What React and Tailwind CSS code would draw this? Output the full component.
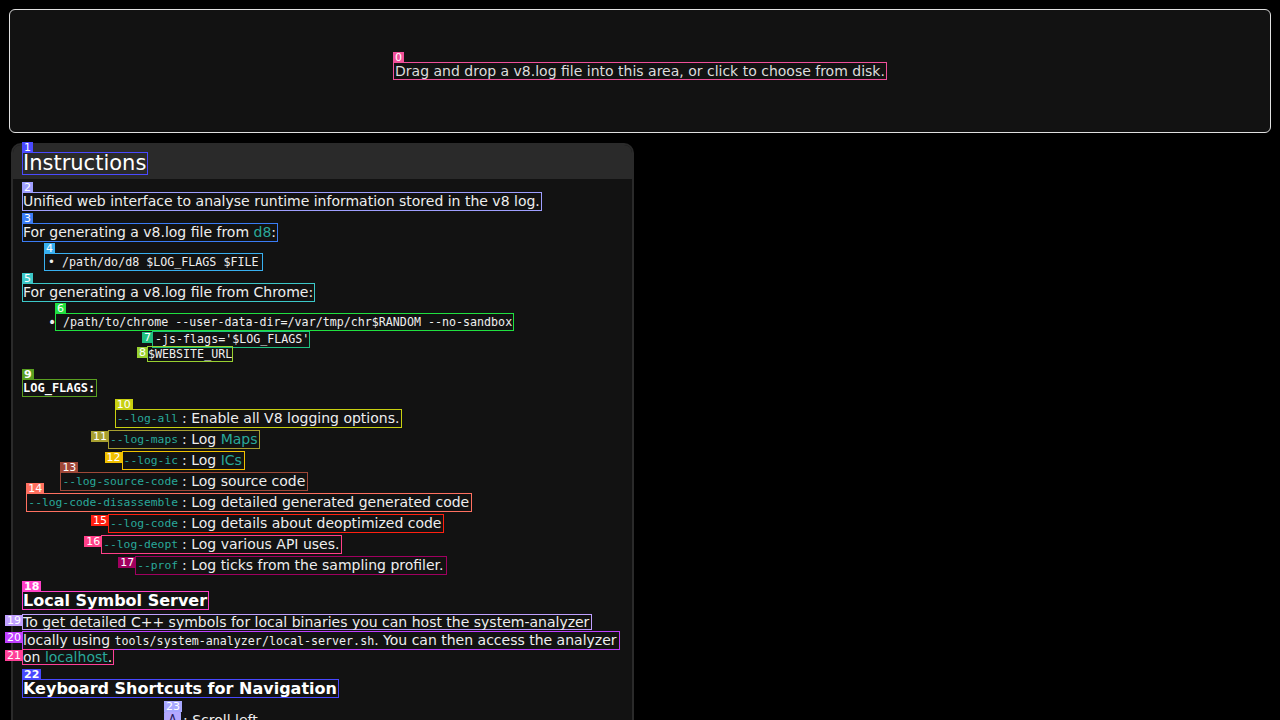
import React from "react";

const sans = "font-['DejaVu_Sans',sans-serif]";
const mono = "font-['DejaVu_Sans_Mono',monospace]";

// small numbered marker glued to a box
function Tag({ n, bg, side = "top" }) {
  const pos = side === "top" ? "left-[-1px] bottom-full" : "right-full top-0";
  return (
    <span
      className={`absolute ${pos} ${bg} ${sans} px-[2px] text-[11px] leading-[11px] text-white whitespace-nowrap`}
    >
      {n}
    </span>
  );
}

const Teal = ({ children }) => <span className="text-[#29a89a]">{children}</span>;

const flags = [
  { n: 10, code: "--log-all", text: "Enable all V8 logging options.", side: "top", bg: "bg-[#c8d010]", bd: "border-[#c8d010]" },
  { n: 11, code: "--log-maps", text: <>Log <Teal>Maps</Teal></>, side: "left", bg: "bg-[#a8a030]", bd: "border-[#a8a030]" },
  { n: 12, code: "--log-ic", text: <>Log <Teal>ICs</Teal></>, side: "left", bg: "bg-[#f0c000]", bd: "border-[#f0c000]" },
  { n: 13, code: "--log-source-code", text: "Log source code", side: "top", bg: "bg-[#a04838]", bd: "border-[#a04838]" },
  { n: 14, code: "--log-code-disassemble", text: "Log detailed generated generated code", side: "top", bg: "bg-[#ff7060]", bd: "border-[#ff7060]" },
  { n: 15, code: "--log-code", text: "Log details about deoptimized code", side: "left", bg: "bg-[#ff2010]", bd: "border-[#ff2010]" },
  { n: 16, code: "--log-deopt", text: "Log various API uses.", side: "left", bg: "bg-[#ff4088]", bd: "border-[#ff4088]" },
  { n: 17, code: "--prof", text: "Log ticks from the sampling profiler.", side: "left", bg: "bg-[#a00060]", bd: "border-[#a00060]" },
];

function FlagRow({ f, first }) {
  return (
    <div className={`flex ${first ? "mt-[12px]" : "mt-[2px]"}`}>
      <div className="w-[156px] flex justify-end">
        <span className={`relative border-y border-l ${f.bd} pl-[1px] ${mono} text-[11.3px] leading-[17px] text-[#29a89a] whitespace-nowrap`}>
          <Tag n={f.n} bg={f.bg} side={f.side} />
          {f.code}
        </span>
      </div>
      <span className={`border-y border-r ${f.bd} pl-[4px] pr-[2px] text-[14px] leading-[17px] whitespace-nowrap`}>
        : {f.text}
      </span>
    </div>
  );
}

export default function App() {
  return (
    <div className={`min-h-screen bg-black pt-[9px] pb-10 ${sans} text-[#eeeeee]`}>
      {/* drop zone */}
      <div className="mx-[9px] h-[124px] border border-[#e0e0e0] rounded-[6px] bg-[#121212] flex items-center justify-center">
        <span className="relative border border-[#f0509a] px-[1px] text-[14px] leading-[16px] text-[#dddddd]">
          <Tag n={0} bg="bg-[#f0509a]" />
          Drag and drop a v8.log file into this area, or click to choose from disk.
        </span>
      </div>

      {/* instructions panel */}
      <div className="mt-[10px] ml-[11px] w-[623px] border-2 border-[#2a2a2a] rounded-t-[10px] bg-[#121212]">
        <div className="h-[34px] bg-[#2a2a2a] rounded-t-[8px] pt-[7px] pl-[9px]">
          <h1 className="relative inline-block border border-[#4a4aff] pr-[1px] text-[21px] leading-[21px] text-white font-normal">
            <Tag n={1} bg="bg-[#4a4aff]" />
            Instructions
          </h1>
        </div>

        <div className="pt-[13px] pl-[9px] flex flex-col items-start text-[14px]">
          <p className="relative border border-[#9f9fff] pr-[1px] leading-[17px]">
            <Tag n={2} bg="bg-[#9f9fff]" />
            Unified web interface to analyse runtime information stored in the v8 log.
          </p>

          <p className="relative mt-[12px] border border-[#3a7cf5] pr-[1px] leading-[17px]">
            <Tag n={3} bg="bg-[#3a7cf5]" />
            For generating a v8.log file from <Teal>d8</Teal>:
          </p>

          <div className={`relative mt-[11px] ml-[22px] flex border border-[#38b0f0] pl-[3px] pr-[3px] ${mono} text-[11.67px] leading-[16px]`}>
            <Tag n={4} bg="bg-[#38b0f0]" />
            <span className={`w-[14px] ${sans}`}>•</span>
            <span>/path/do/d8 $LOG_FLAGS $FILE</span>
          </div>

          <p className="relative mt-[12px] border border-[#3cc8c8] pr-[1px] leading-[17px]">
            <Tag n={5} bg="bg-[#3cc8c8]" />
            For generating a v8.log file from Chrome:
          </p>

          <div className="mt-[11px] ml-[26px] flex">
            <span className="w-[7px] leading-[18px]">•</span>
            <span className={`relative border border-[#20e040] pr-[1px] ${mono} text-[11.67px] leading-[16px] whitespace-pre`}>
              <Tag n={6} bg="bg-[#20e040]" />
              {" /path/to/chrome --user-data-dir=/var/tmp/chr$RANDOM --no-sandbox"}
            </span>
          </div>
          <span className={`relative ml-[130px] border border-[#20c080] pl-[2px] ${mono} text-[11.67px] leading-[15px]`}>
            <Tag n={7} bg="bg-[#20c080]" side="left" />
            -js-flags='$LOG_FLAGS'
          </span>
          <span className={`relative ml-[125px] -mt-[2px] border border-[#98d030] ${mono} text-[11.67px] leading-[14px]`}>
            <Tag n={8} bg="bg-[#98d030]" side="left" />
            $WEBSITE_URL
          </span>

          <span className={`relative mt-[17px] border border-[#5aa020] pr-[1px] ${mono} font-bold text-[12px] leading-[16px] text-white`}>
            <Tag n={9} bg="bg-[#5aa020]" />
            LOG_FLAGS:
          </span>

          {flags.map((f, i) => (
            <FlagRow key={f.n} f={f} first={i === 0} />
          ))}

          <h3 className="relative mt-[16px] border border-[#ff40c8] pr-[1px] text-[16px] leading-[17px] font-bold text-white">
            <Tag n={18} bg="bg-[#ff40c8]" />
            Local Symbol Server
          </h3>
          <span className="relative mt-[4px] border border-[#c0a0ff] pr-[2px] leading-[14px] whitespace-nowrap">
            <Tag n={19} bg="bg-[#c0a0ff]" side="left" />
            To get detailed C++ symbols for local binaries you can host the system-analyzer
          </span>
          <span className="relative mt-[1px] border border-[#c040ff] pr-[2px] leading-[16px] whitespace-nowrap">
            <Tag n={20} bg="bg-[#c040ff]" side="left" />
            locally using <code className={`${mono} text-[11.67px]`}>tools/system-analyzer/local-server.sh</code>. You can then access the analyzer
          </span>
          <span className="relative -mt-[1px] border border-[#ff4098] pr-[1px] leading-[14px]">
            <Tag n={21} bg="bg-[#ff4098]" side="left" />
            on <Teal>localhost</Teal>.
          </span>

          <h3 className="relative mt-[14px] border border-[#4848ff] pr-[1px] text-[16px] leading-[17px] font-bold text-white">
            <Tag n={22} bg="bg-[#4848ff]" />
            Keyboard Shortcuts for Navigation
          </h3>

          <div className="mt-[13px] flex">
            <div className="w-[159px] flex justify-end">
              <kbd className="relative w-[17px] h-[18px] border border-[#a8a8ff] bg-[#b4a8ff] rounded-[2px] text-[#2a2060] text-[12px] leading-[16px] text-center font-normal">
                <Tag n={23} bg="bg-[#a8a8ff]" />
                A
              </kbd>
            </div>
            <span className="pl-[2px] leading-[18px]">: Scroll left</span>
          </div>
          <div className="mt-[4px] flex">
            <div className="w-[159px] flex justify-end">
              <kbd className="w-[17px] h-[18px] bg-[#b4a8ff] rounded-[2px] text-[#2a2060] text-[12px] leading-[16px] text-center">D</kbd>
            </div>
            <span className="pl-[2px] leading-[18px]">: Scroll right</span>
          </div>
          <div className="h-[20px]" />
        </div>
      </div>
    </div>
  );
}
